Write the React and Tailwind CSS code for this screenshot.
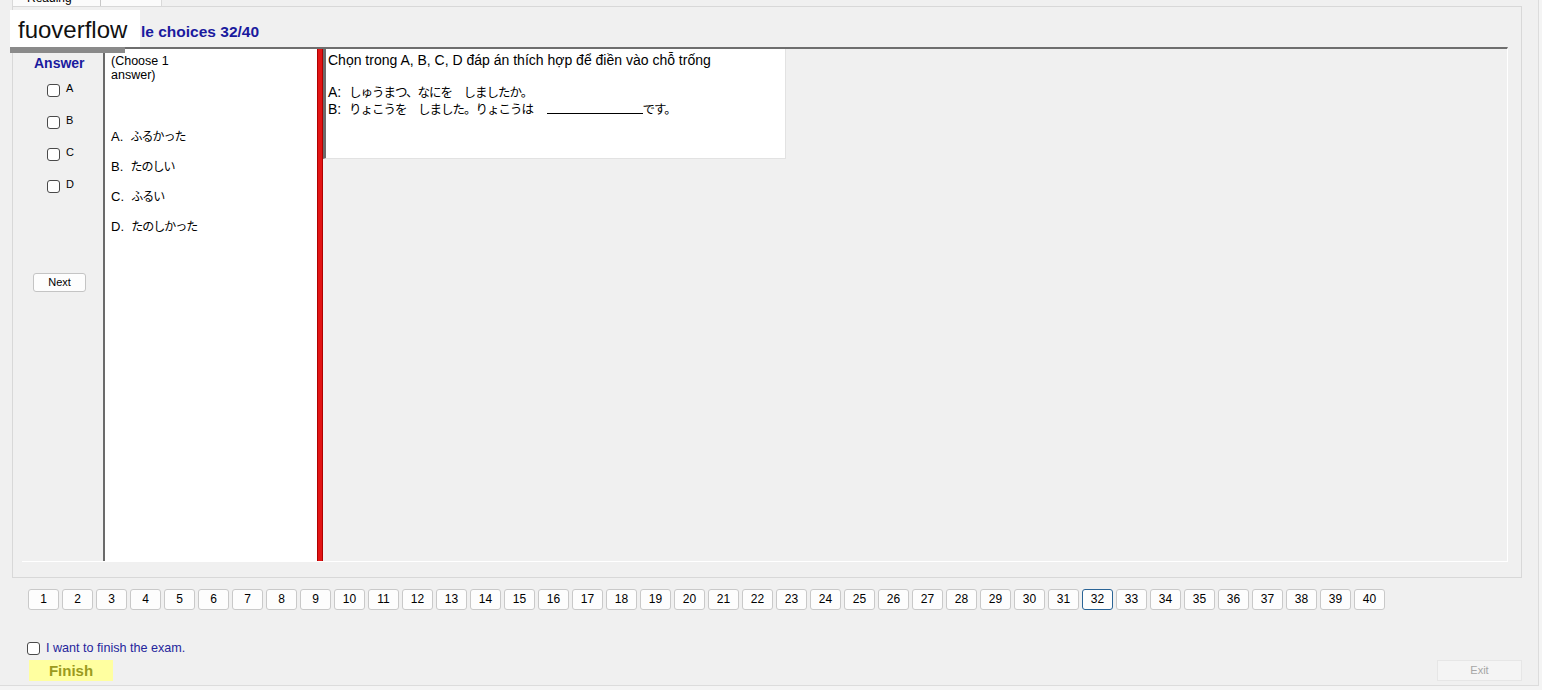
const FONT = "font-['Liberation_Sans','Noto_Sans_CJK_JP',sans-serif]";

function Box() {
  return <div className="w-[13px] h-[13px] rounded-[3px] border border-[#4a4a4a] bg-white" />;
}

const pages = Array.from({ length: 40 }, (_, i) => i + 1);

export default function App() {
  return (
    <div className={`relative w-[1542px] h-[690px] overflow-hidden bg-[#f4f4f4] text-black ${FONT}`}>
      <div className="w-[1539px] h-[686px] bg-[#f0f0f0] border-r border-b border-[#dcdcdc] flex flex-col">
        {/* tab strip */}
        <div className="h-[6px] overflow-hidden flex pl-[12px]">
          <div className="w-[150px] h-[6px] bg-[#fbfbfb] border-x border-[#d9d9d9] flex">
            <div className="w-[88px] border-r border-[#c8c8c8] pl-[14px] -mt-[9px] text-[12px] leading-[14px]">Reading</div>
          </div>
        </div>

        {/* group box */}
        <div className="ml-[12px] w-[1510px] h-[572px] border border-[#d8d8d8] flex flex-col pl-[9px]">
          <div className="h-[40px] pt-[16px] pl-[119px] text-[15.5px] leading-[18px] font-bold text-[#1a1a9e]">
            le choices 32/40
          </div>

          {/* question panel */}
          <div className="w-[1486px] h-[515px] border-t-2 border-[#6e6e6e] border-b border-r border-b-white border-r-white flex">
            {/* answer column */}
            <div className="w-[81px] flex flex-col">
              <div className="pt-[6px] pl-[12px] text-[14px] leading-[16px] font-bold text-[#1a1a9e]">Answer</div>
              <div className="mt-[3px] flex flex-col">
                {["A", "B", "C", "D"].map((l) => (
                  <div key={l} className="h-[32px] flex items-center pl-[25px] gap-[6px] text-[11px]">
                    <Box />
                    <span className="-mt-[3px]">{l}</span>
                  </div>
                ))}
              </div>
              <button className="mt-[71px] ml-[11px] w-[53px] h-[19px] bg-[#fdfdfd] border border-[#c4c4c4] rounded-[3px] text-[11px] leading-[17px]">
                Next
              </button>
            </div>

            {/* options column */}
            <div className="w-[214px] bg-white border-l-2 border-[#6a6a6a] pl-[6px] pt-[5px]">
              <div className="text-[12.5px] leading-[14px]">
                (Choose 1
                <br />
                answer)
              </div>
              <div className="mt-[40px] flex flex-col">
                {[
                  ["A.", "ふるかった"],
                  ["B.", "たのしい"],
                  ["C.", "ふるい"],
                  ["D.", "たのしかった"],
                ].map(([k, v]) => (
                  <div key={k} className="h-[30px] leading-[30px] text-[13px] whitespace-pre">
                    {k}
                    {"  "}
                    <span className="text-[12px] tracking-[-1px]">{v}</span>
                  </div>
                ))}
              </div>
            </div>

            {/* splitter */}
            <div className="w-[6px] bg-[#e21414] border-x border-[#b00000]" />

            {/* question box */}
            <div className="flex-1">
              <div className="w-[463px] h-[110px] bg-white border-l-[3px] border-[#6c6c6c] border-r border-b border-r-[#e2e2e2] border-b-[#e2e2e2] pl-[2px] pt-[3px] text-[14px] leading-[16px]">
                <div>Chọn trong A, B, C, D đáp án thích hợp để điền vào chỗ trống</div>
                <div className="h-[16px]" />
                <div className="whitespace-pre">
                  A:{"  "}
                  <span className="text-[12.5px] tracking-[-1px]">しゅうまつ、なにを　しましたか。</span>
                </div>
                <div className="whitespace-pre">
                  B:{"  "}
                  <span className="text-[12.5px] tracking-[-1px]">りょこうを　しました。りょこうは　</span>
                  <span className="inline-block w-[96px] border-b border-black align-baseline ml-[2px]" />
                  <span className="text-[12.5px] tracking-[-1px]">です。</span>
                </div>
              </div>
            </div>
          </div>
        </div>

        {/* pager */}
        <div className="mt-[11px] pl-[28px] flex gap-[3px]">
          {pages.map((p) => (
            <button
              key={p}
              className={
                p === 32
                  ? "w-[31px] h-[21px] rounded-[3px] bg-[#fdfdfd] border border-[#2a6496] text-[12px] leading-[19px]"
                  : "w-[31px] h-[21px] rounded-[3px] bg-[#fdfdfd] border border-[#c9c9c9] text-[12px] leading-[19px]"
              }
            >
              {p}
            </button>
          ))}
        </div>

        {/* finish */}
        <div className="mt-[31px] pl-[27px] h-[14px] flex items-center gap-[6px]">
          <Box />
          <span className="text-[12.6px] text-[#25259c] mt-[1px]">I want to finish the exam.</span>
        </div>
        <div className="mt-[5px] pl-[29px] pr-[16px] flex justify-between">
          <button className="w-[84px] h-[21px] bg-[#ffffa0] text-[15px] font-bold text-[#9b9b1e] leading-[22px]">
            Finish
          </button>
          <button className="w-[85px] h-[21px] bg-[#f4f4f4] border border-[#e6e6e6] text-[11px] text-[#a6a6a6] leading-[19px]">
            Exit
          </button>
        </div>
      </div>

      {/* watermark overlay */}
      <div className="absolute left-[10px] top-[10px] w-[130px] h-[37px] bg-white pl-[8px] pt-[3px] text-[24px] leading-[34px] text-[#111]">
        fuoverflow
      </div>
      <div className="absolute left-[10px] top-[47px] w-[115px] h-[6px] bg-[#8a8a8a]" />
    </div>
  );
}
